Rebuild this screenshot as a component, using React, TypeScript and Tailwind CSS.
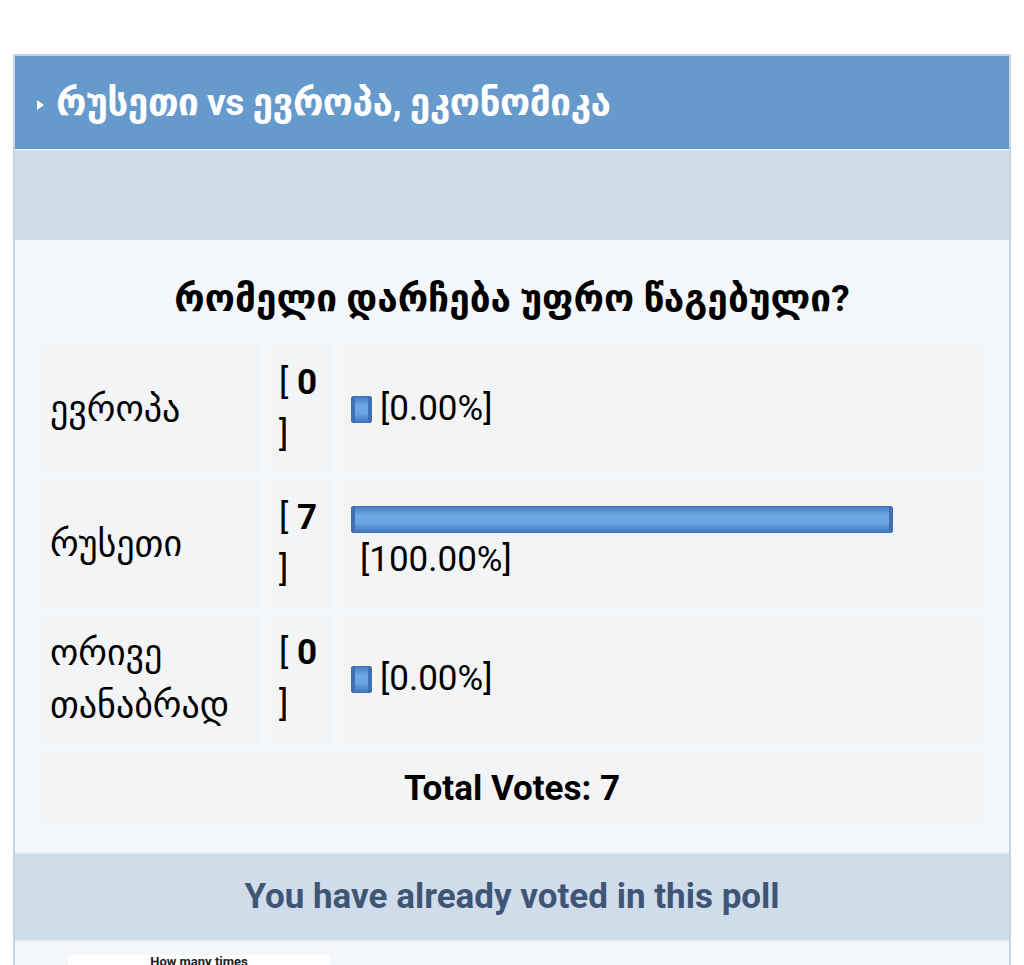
const rows = [
  { label: 'ევროპა', votes: 0, pct: 0 },
  { label: 'რუსეთი', votes: 7, pct: 100 },
  { label: 'ორივე თანაბრად', votes: 0, pct: 0 },
];

const Bar = ({ width }: { width: number }) => (
  <span
    className="inline-block h-[27px] align-middle rounded-[2px] border border-[#3f6fb5] bg-[linear-gradient(to_bottom,#4a7cc4_0%,#6fa9e6_35%,#6aa4e2_65%,#4577c0_100%)] shadow-[inset_3px_0_0_#3f6fb5,inset_-3px_0_0_#3f6fb5]"
    style={{ width }}
  />
);

export default function App() {
  return (
    <div className="h-[965px] overflow-hidden bg-white pt-[54px] font-['Roboto','DejaVu_Sans',sans-serif] text-black">
      <div className="mx-[13px] border-2 border-b-0 border-[#c8d5df] bg-[#f4f7fa]">
        {/* title */}
        <div className="flex h-[95px] items-center gap-[12px] bg-[#6699cc] pl-[22px] border-b-2 border-[#e4ecf4]">
          <svg width="7" height="10" viewBox="0 0 7 10" className="mt-[4px]">
            <path d="M0 0 L7 5 L0 10 Z" fill="#ffffff" />
          </svg>
          <span className="text-[37px] font-bold text-white tracking-[-0.5px]">რუსეთი vs ევროპა, ეკონომიკა</span>
        </div>
        <div className="h-[89px] bg-[#d0dce9]" />

        {/* poll */}
        <div className="px-[17px] pt-[37px] pb-[19px]">
          <div className="mb-[18px] text-center text-[37px] font-bold leading-[44px]">
            რომელი დარჩება უფრო წაგებული?
          </div>
          <table className="w-full border-separate border-spacing-[5px] text-[35px] leading-[52px]">
            <tbody>
              {rows.map((r) => (
                <tr key={r.label}>
                  <td className="w-[223px] bg-[#f2f4f5] px-[13px] py-[12px] h-[130px] align-middle text-[36px] leading-[52px]">{r.label}</td>
                  <td className="w-[67px] bg-[#f2f4f5] px-[14px] py-[12px] align-middle">
                    [ <b>{r.votes}</b> ]
                  </td>
                  <td className="bg-[#f2f4f5] px-[14px] py-[12px] align-middle">
                    {r.pct === 0 ? (
                      <div className="flex items-center gap-[8px]">
                        <Bar width={21} />
                        <span>[0.00%]</span>
                      </div>
                    ) : (
                      <div className="flex flex-col pt-[4px]">
                        <Bar width={542} />
                        <span className="pl-[9px] leading-[54px]">[100.00%]</span>
                      </div>
                    )}
                  </td>
                </tr>
              ))}
              <tr>
                <td colSpan={3} className="h-[79px] bg-[#f2f4f5] text-center text-[35px] font-bold">
                  Total Votes: 7
                </td>
              </tr>
            </tbody>
          </table>
        </div>

        <div className="border-t-2 border-[#e4ecf4] flex h-[88px] items-center justify-center bg-[#d0dce9] text-[35px] font-bold text-[#3e5576]">
          You have already voted in this poll
        </div>
        <div className="border-t-2 border-[#e4ecf4] h-[40px] bg-[#f4f7fa] pl-[53px] pt-[13px]">
          <div className="h-[40px] w-[262px] bg-white text-center text-[13px] font-bold leading-[14px] text-[#222]">How many times</div>
        </div>
      </div>
    </div>
  );
}
